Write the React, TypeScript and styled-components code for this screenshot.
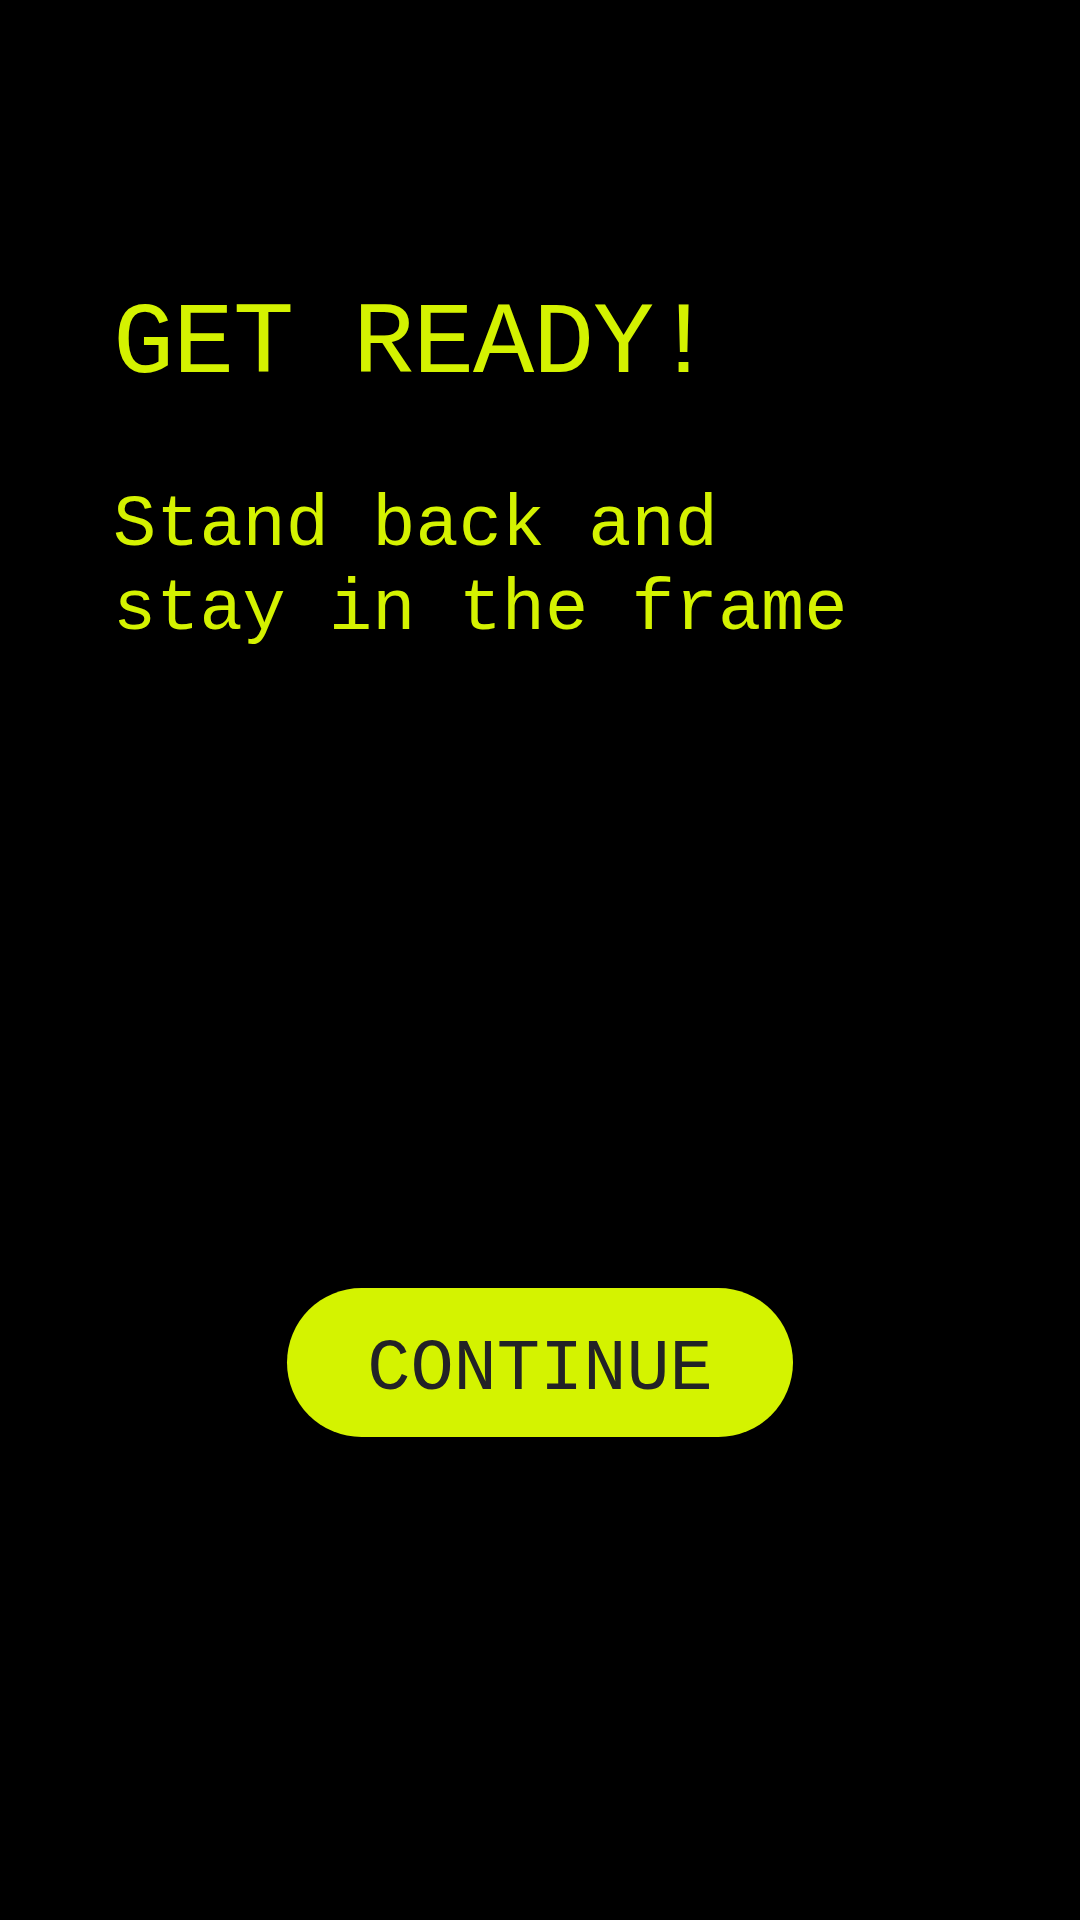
import React from "react";
import styled, { createGlobalStyle } from "styled-components";

const Global = createGlobalStyle`
  html, body {
    margin: 0;
    padding: 0;
    background: #000000;
  }
  #root {
    min-height: 1920px;
  }
`;

const Screen = styled.main`
  width: 1080px;
  height: 1920px;
  box-sizing: border-box;
  background: #000000;
  display: flex;
  flex-direction: column;
  padding-top: 294px;
  font-family: "Liberation Mono", "DejaVu Sans Mono", monospace;
`;

const Copy = styled.section`
  display: flex;
  flex-direction: column;
  padding-left: 113px;
  gap: 88px;
`;

const Title = styled.h1`
  margin: 0;
  font-family: inherit;
  font-weight: 400;
  font-size: 102px;
  line-height: 102px;
  letter-spacing: -1.2px;
  color: #d4f200;
`;

const Subtitle = styled.p`
  margin: 0;
  font-size: 72px;
  line-height: 84px;
  letter-spacing: 0;
  color: #d4f200;
`;

const Actions = styled.div`
  display: flex;
  justify-content: center;
  margin-top: 636px;
`;

const Button = styled.button`
  width: 506px;
  height: 149px;
  border: none;
  border-radius: 75px;
  background: #d4f300;
  color: #222226;
  font-family: "Liberation Mono", "DejaVu Sans Mono", monospace;
  font-size: 72px;
  line-height: 84px;
  padding: 14px 0 0 0;
  display: flex;
  align-items: center;
  justify-content: center;
  cursor: pointer;
`;

export default function App() {
  return (
    <>
      <Global />
      <Screen>
        <Copy>
          <Title>GET READY!</Title>
          <Subtitle>
            Stand back and
            <br />
            stay in the frame
          </Subtitle>
        </Copy>
        <Actions>
          <Button>CONTINUE</Button>
        </Actions>
      </Screen>
    </>
  );
}
